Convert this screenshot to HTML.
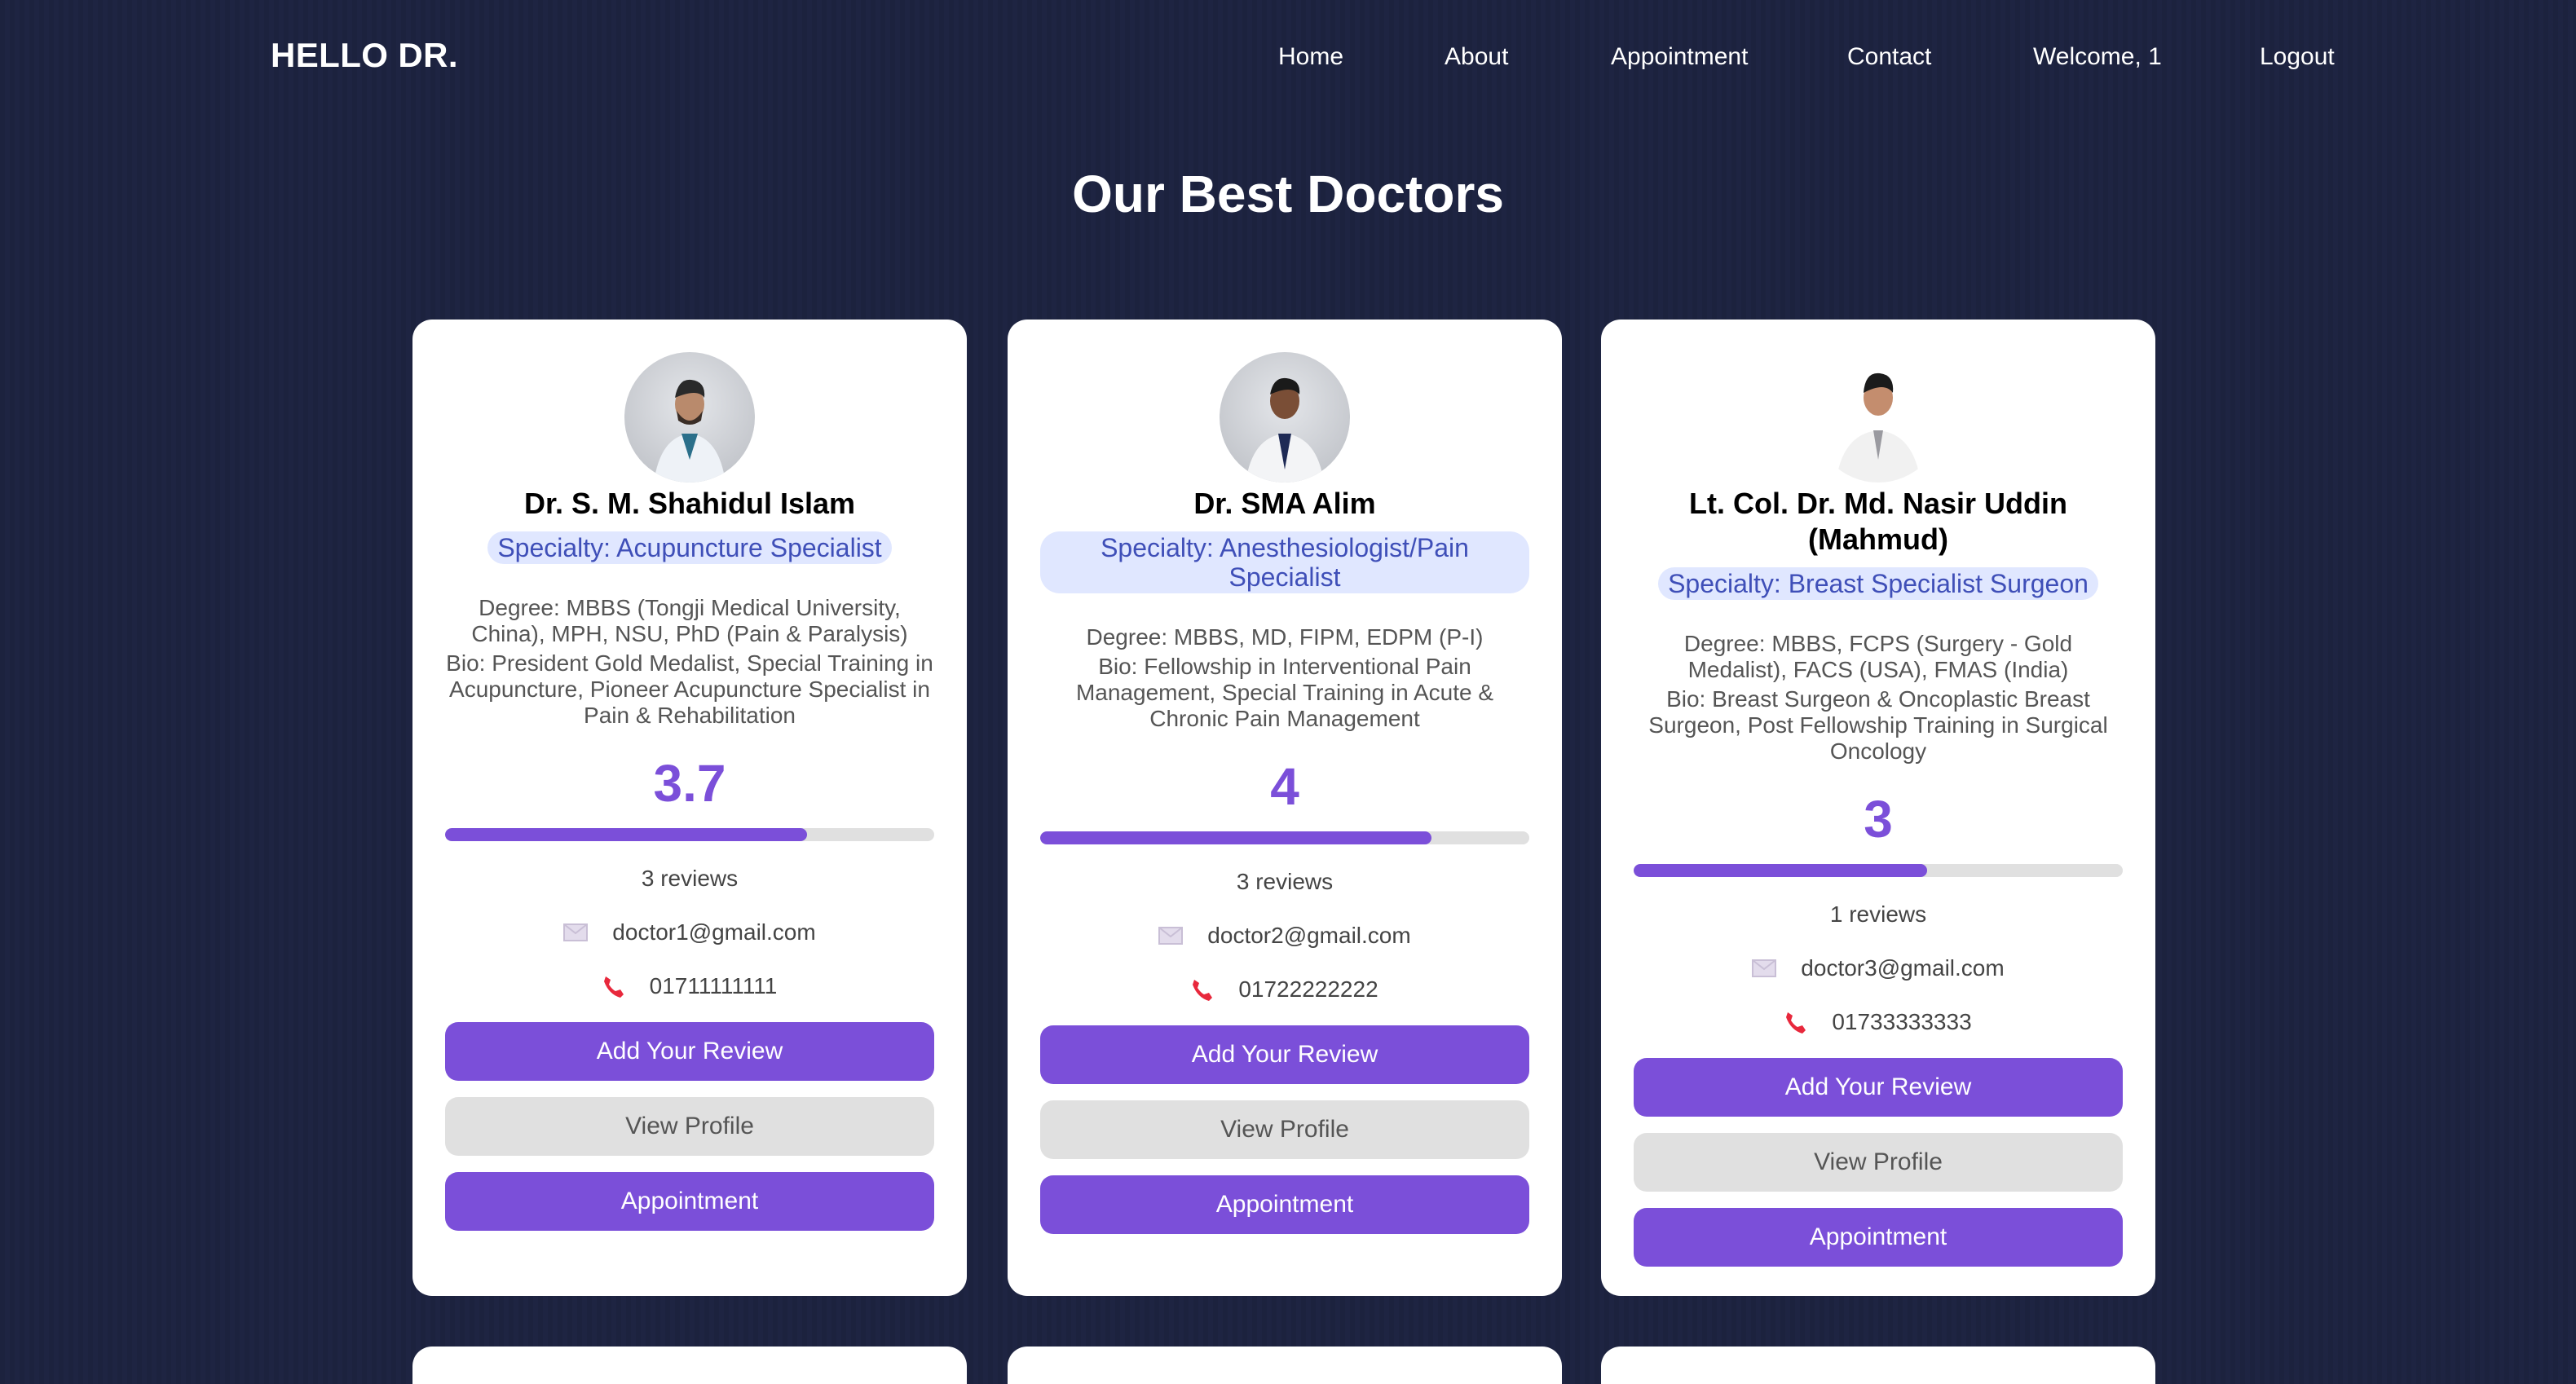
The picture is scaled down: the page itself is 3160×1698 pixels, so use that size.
<!DOCTYPE html>
<html><head><meta charset="utf-8">
<style>
html,body{margin:0;padding:0;overflow:hidden}
body{width:1580px;height:849px;overflow:hidden;zoom:2;background:#1e2442;font-family:"Liberation Sans",Arial,sans-serif;position:relative;
background-image:repeating-linear-gradient(90deg,rgba(0,0,0,0.06) 0 6px,transparent 6px 12px);}
.logo{position:absolute;left:166px;top:22px;color:#fff;font-weight:bold;font-size:21px;letter-spacing:0.2px}
.nav a{position:absolute;top:26px;color:#fff;font-size:15px;text-decoration:none;line-height:18px}
h1{position:absolute;left:0;width:1580px;top:99px;margin:0;text-align:center;color:#fff;font-size:32px;line-height:40px;font-weight:bold}
.card{position:absolute;width:300px;background:#fff;border-radius:12px;padding:20px 20px 40px;text-align:center;box-sizing:content-box}
.av{width:80px;height:80px;border-radius:50%;margin:0 auto;overflow:hidden;background:radial-gradient(circle at 50% 40%,#e4e6ea,#b9bcc2);position:relative}
h3{margin:2px 0 0;font-size:18px;line-height:22px;color:#000}
.sp{display:inline-block;margin-top:6px;background:#e0e7ff;color:#3f4fb8;font-size:16px;line-height:18px;padding:1px 6px;border-radius:12px}
.info{margin-top:19px;font-size:14px;line-height:16px;color:#555}
.info p{margin:0}.info p+p{margin-top:2px}
.rt{margin-top:15px;font-size:32px;line-height:37px;font-weight:bold;color:#7b4fd9}
.bar{margin-top:9px;height:8px;border-radius:4px;background:#e0e0e0;overflow:hidden}
.bar div{height:100%;background:#7b4fd9;border-radius:4px}
.rv{margin-top:14px;font-size:14px;line-height:18px;color:#444}
.ln{margin-top:15px;font-size:14px;line-height:18px;color:#444;display:flex;justify-content:center;align-items:center;gap:15px}
.btn{height:36px;line-height:36px;border-radius:8px;font-size:15px;margin-top:10px}
.p{background:#7b4fd9;color:#fff}.g{background:#e0e0e0;color:#555}
.b1{margin-top:13px}
.bot{position:absolute;top:826px;width:340px;height:23px;background:#fff;border-radius:12px 12px 0 0}
</style></head><body>
<div class="logo">HELLO DR.</div>
<div class="nav">
<a style="left:784px">Home</a><a style="left:886px">About</a><a style="left:988px">Appointment</a><a style="left:1133px">Contact</a><a style="left:1247px">Welcome, 1</a><a style="left:1386px">Logout</a>
</div>
<h1>Our Best Doctors</h1>

<div class="card" style="left:253px;top:196px;height:539px">
<div class="av"><svg width="80" height="80"><path d="M18 80 Q22 52 40 50 Q58 52 62 80Z" fill="#eef2f7"/><path d="M35 50 L40 66 L45 50Z" fill="#2b6f8a"/><ellipse cx="40" cy="32" rx="9" ry="11" fill="#b98a6c"/><path d="M31 28 Q33 16 41 17 Q50 18 49 28 Q45 22 31 28Z" fill="#2a2a2a"/><path d="M32 36 Q40 48 48 36 L47 42 Q40 47 33 42Z" fill="#3a2d26"/></svg></div>
<h3>Dr. S. M. Shahidul Islam</h3>
<div class="sp">Specialty: Acupuncture Specialist</div>
<div class="info"><p>Degree: MBBS (Tongji Medical University, China), MPH, NSU, PhD (Pain &amp; Paralysis)</p><p>Bio: President Gold Medalist, Special Training in Acupuncture, Pioneer Acupuncture Specialist in Pain &amp; Rehabilitation</p></div>
<div class="rt">3.7</div>
<div class="bar"><div style="width:74%"></div></div>
<div class="rv">3 reviews</div>
<div class="ln"><svg width="15" height="11"><rect x=".5" y=".5" width="14" height="10" fill="#e3dcec" stroke="#c9bfd6"/><path d="M.5 .5 L7.5 6 L14.5 .5" fill="none" stroke="#c9bfd6"/></svg><span>doctor1@gmail.com</span></div>
<div class="ln"><svg width="14" height="14" viewBox="0 0 14 14"><path d="M2 1 L5 3 L4 6 Q6 9 8 10 L11 9 L13 12 L11 14 Q4 12 1 4Z" fill="#e8283c"/></svg><span>01711111111</span></div>
<div class="btn p b1">Add Your Review</div><div class="btn g">View Profile</div><div class="btn p">Appointment</div>
</div>

<div class="card" style="left:618px;top:196px;height:539px">
<div class="av"><svg width="80" height="80"><path d="M16 80 Q20 52 40 50 Q60 52 64 80Z" fill="#f3f4f6"/><path d="M36 50 L40 72 L44 50Z" fill="#1e2a55"/><ellipse cx="40" cy="30" rx="9" ry="11" fill="#7a4e36"/><path d="M31 26 Q33 15 41 16 Q50 17 49 26 Q44 20 31 26Z" fill="#1a1a1a"/></svg></div>
<h3>Dr. SMA Alim</h3>
<div class="sp">Specialty: Anesthesiologist/Pain Specialist</div>
<div class="info"><p>Degree: MBBS, MD, FIPM, EDPM (P-I)</p><p>Bio: Fellowship in Interventional Pain Management, Special Training in Acute &amp; Chronic Pain Management</p></div>
<div class="rt">4</div>
<div class="bar"><div style="width:80%"></div></div>
<div class="rv">3 reviews</div>
<div class="ln"><svg width="15" height="11"><rect x=".5" y=".5" width="14" height="10" fill="#e3dcec" stroke="#c9bfd6"/><path d="M.5 .5 L7.5 6 L14.5 .5" fill="none" stroke="#c9bfd6"/></svg><span>doctor2@gmail.com</span></div>
<div class="ln"><svg width="14" height="14" viewBox="0 0 14 14"><path d="M2 1 L5 3 L4 6 Q6 9 8 10 L11 9 L13 12 L11 14 Q4 12 1 4Z" fill="#e8283c"/></svg><span>01722222222</span></div>
<div class="btn p b1">Add Your Review</div><div class="btn g">View Profile</div><div class="btn p">Appointment</div>
</div>

<div class="card" style="left:982px;top:196px;height:539px">
<div class="av" style="background:#fff"><svg width="80" height="80"><path d="M14 80 Q18 50 40 48 Q62 50 66 80Z" fill="#f1f1f1"/><path d="M37 48 L40 66 L43 48Z" fill="#9a9aa0"/><ellipse cx="40" cy="28" rx="9" ry="11" fill="#c48d6e"/><path d="M31 25 Q32 12 41 13 Q50 14 49 25 Q44 18 31 25Z" fill="#1b1b1b"/></svg></div>
<h3>Lt. Col. Dr. Md. Nasir Uddin (Mahmud)</h3>
<div class="sp">Specialty: Breast Specialist Surgeon</div>
<div class="info"><p>Degree: MBBS, FCPS (Surgery - Gold Medalist), FACS (USA), FMAS (India)</p><p>Bio: Breast Surgeon &amp; Oncoplastic Breast Surgeon, Post Fellowship Training in Surgical Oncology</p></div>
<div class="rt">3</div>
<div class="bar"><div style="width:60%"></div></div>
<div class="rv">1 reviews</div>
<div class="ln"><svg width="15" height="11"><rect x=".5" y=".5" width="14" height="10" fill="#e3dcec" stroke="#c9bfd6"/><path d="M.5 .5 L7.5 6 L14.5 .5" fill="none" stroke="#c9bfd6"/></svg><span>doctor3@gmail.com</span></div>
<div class="ln"><svg width="14" height="14" viewBox="0 0 14 14"><path d="M2 1 L5 3 L4 6 Q6 9 8 10 L11 9 L13 12 L11 14 Q4 12 1 4Z" fill="#e8283c"/></svg><span>01733333333</span></div>
<div class="btn p b1">Add Your Review</div><div class="btn g">View Profile</div><div class="btn p">Appointment</div>
</div>

<div class="bot" style="left:253px"></div>
<div class="bot" style="left:618px"></div>
<div class="bot" style="left:982px"></div>
</body></html>
